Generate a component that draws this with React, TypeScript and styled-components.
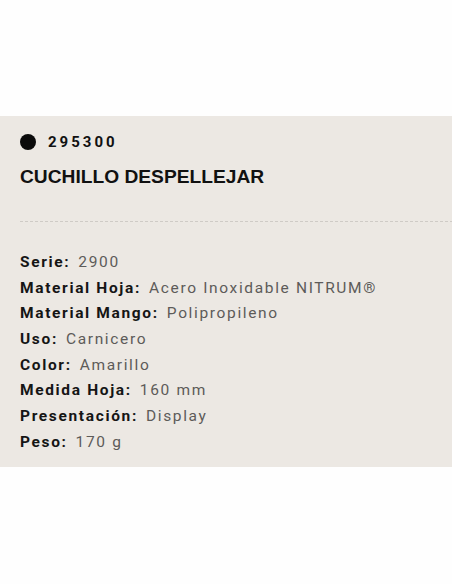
import { createGlobalStyle } from "styled-components";
import styled from "styled-components";

const GlobalStyle = createGlobalStyle`
  html, body {
    margin: 0;
    padding: 0;
    background: #fefefe;
  }
  body {
    font-family: Roboto, "Liberation Sans", sans-serif;
  }
`;

const Page = styled.div`
  width: 452px;
  height: 584px;
  padding-top: 116px;
  box-sizing: border-box;
`;

const Panel = styled.section`
  background: #ece8e3;
  height: 351px;
  padding: 18px 0 0 20px;
  box-sizing: border-box;
`;

const CodeRow = styled.div`
  display: flex;
  align-items: center;
  gap: 12px;
  height: 16px;
`;

const Dot = styled.span`
  width: 16px;
  height: 16px;
  border-radius: 50%;
  background: #0b0b0b;
`;

const Code = styled.span`
  font-size: 15px;
  font-weight: 700;
  letter-spacing: 3px;
  color: #111;
`;

const Title = styled.h1`
  margin: 16px 0 0;
  font-family: "Liberation Sans", Arial, sans-serif;
  font-size: 19.2px;
  font-weight: 700;
  line-height: 22px;
  color: #111;
`;

const Divider = styled.hr`
  margin: 33px 0 0;
  height: 1px;
  border: 0;
  background-image: linear-gradient(to right, #cfcbc6 3px, transparent 3px);
  background-size: 5px 1px;
`;

const Specs = styled.dl`
  margin: 27px 0 0;
  display: flex;
  flex-direction: column;
`;

const SpecRow = styled.div`
  display: flex;
  height: 25.7px;
  align-items: center;
  font-size: 15.5px;
  letter-spacing: 1.65px;
`;

const Label = styled.dt`
  font-weight: 700;
  color: #151515;
  margin-right: 8px;
`;

const Value = styled.dd`
  margin: 0;
  color: #5d5b59;
`;

const specs: [string, string][] = [
  ["Serie", "2900"],
  ["Material Hoja", "Acero Inoxidable NITRUM®"],
  ["Material Mango", "Polipropileno"],
  ["Uso", "Carnicero"],
  ["Color", "Amarillo"],
  ["Medida Hoja", "160 mm"],
  ["Presentación", "Display"],
  ["Peso", "170 g"],
];

export default function App() {
  return (
    <Page>
      <GlobalStyle />
      <Panel>
        <CodeRow>
          <Dot />
          <Code>295300</Code>
        </CodeRow>
        <Title>CUCHILLO DESPELLEJAR</Title>
        <Divider />
        <Specs>
          {specs.map(([label, value]) => (
            <SpecRow key={label}>
              <Label>{label}:</Label>
              <Value>{value}</Value>
            </SpecRow>
          ))}
        </Specs>
      </Panel>
    </Page>
  );
}
